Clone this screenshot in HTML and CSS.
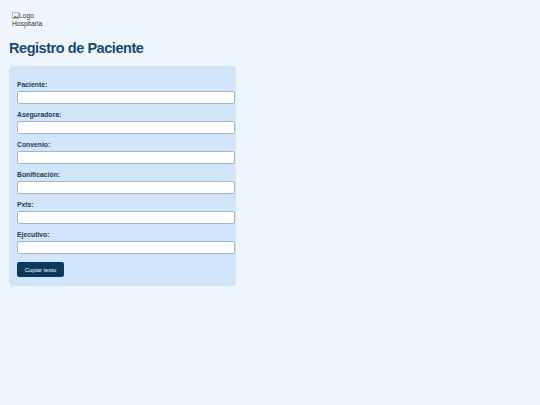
FILE: index.html
```html
<!DOCTYPE html>
<html lang="es">
<head>
    <meta charset="UTF-8">
    <meta name="viewport" content="width=device-width, initial-scale=1.0">
    <title>Registro de Paciente</title>
    <link rel="stylesheet" href="styles.css">
</head>
<body>

<div class="container">
    <div class="logo">
        <svg class="broken" width="7" height="7" viewBox="0 0 7 7">
            <rect x="0.5" y="0.5" width="6" height="6" fill="#f4f4f4" stroke="#b5b5b5"/>
            <path d="M1 6 L3 3.5 L4.5 5 L6 3.8 L6 6 Z" fill="#4c9a3b"/>
        </svg><span>Logo Hospitaria</span>
    </div>

    <h1>Registro de Paciente</h1>

    <form class="card" onsubmit="return false;">
        <label for="paciente">Paciente:</label>
        <input type="text" id="paciente">

        <label for="aseguradora">Aseguradora:</label>
        <input type="text" id="aseguradora">

        <label for="convenio">Convenio:</label>
        <input type="text" id="convenio">

        <label for="bonificacion">Bonificación:</label>
        <input type="text" id="bonificacion">

        <label for="pxts">Pxts:</label>
        <input type="text" id="pxts">

        <label for="ejecutivo">Ejecutivo:</label>
        <input type="text" id="ejecutivo">

        <button class="button" type="button">Copiar texto</button>
    </form>
</div>

</body>
</html>
```

FILE: styles.css
```css
body {
    margin: 0;
    font-family: "Liberation Sans", Arial, sans-serif;
    background-color: #eff5fd;
}
.container {
    padding: 12px 9px;
}
.logo {
    width: 32px;
    margin-left: 3px;
    font-size: 6.7px;
    line-height: 7.5px;
    color: #333;
}
.logo .broken {
    vertical-align: -1px;
}
h1 {
    margin: 13px 0 10px;
    font-size: 14.5px;
    letter-spacing: -0.45px;
    color: #174a6e;
}
.card {
    width: 211px;
    padding: 8px 8px 9px;
    background-color: #d2e6fb;
    border-radius: 4px;
}
.card label {
    display: block;
    margin-top: 6.6px;
    margin-bottom: 2.4px;
    font-size: 6.8px;
    line-height: 8px;
    font-weight: bold;
    color: #1f3a58;
}
.card input {
    display: block;
    box-sizing: content-box;
    width: 100%;
    height: 11px;
    padding: 0 2.5px;
    margin: 0;
    border: 1px solid #a8b4c4;
    border-radius: 2px;
    background-color: #fff;
}
.button {
    display: block;
    margin-top: 8.5px;
    width: 47px;
    height: 15px;
    padding: 0;
    border: none;
    border-radius: 2px;
    background-color: #0d3a5c;
    color: #fff;
    font-family: "Liberation Sans", Arial, sans-serif;
    font-size: 5.8px;
}
```
